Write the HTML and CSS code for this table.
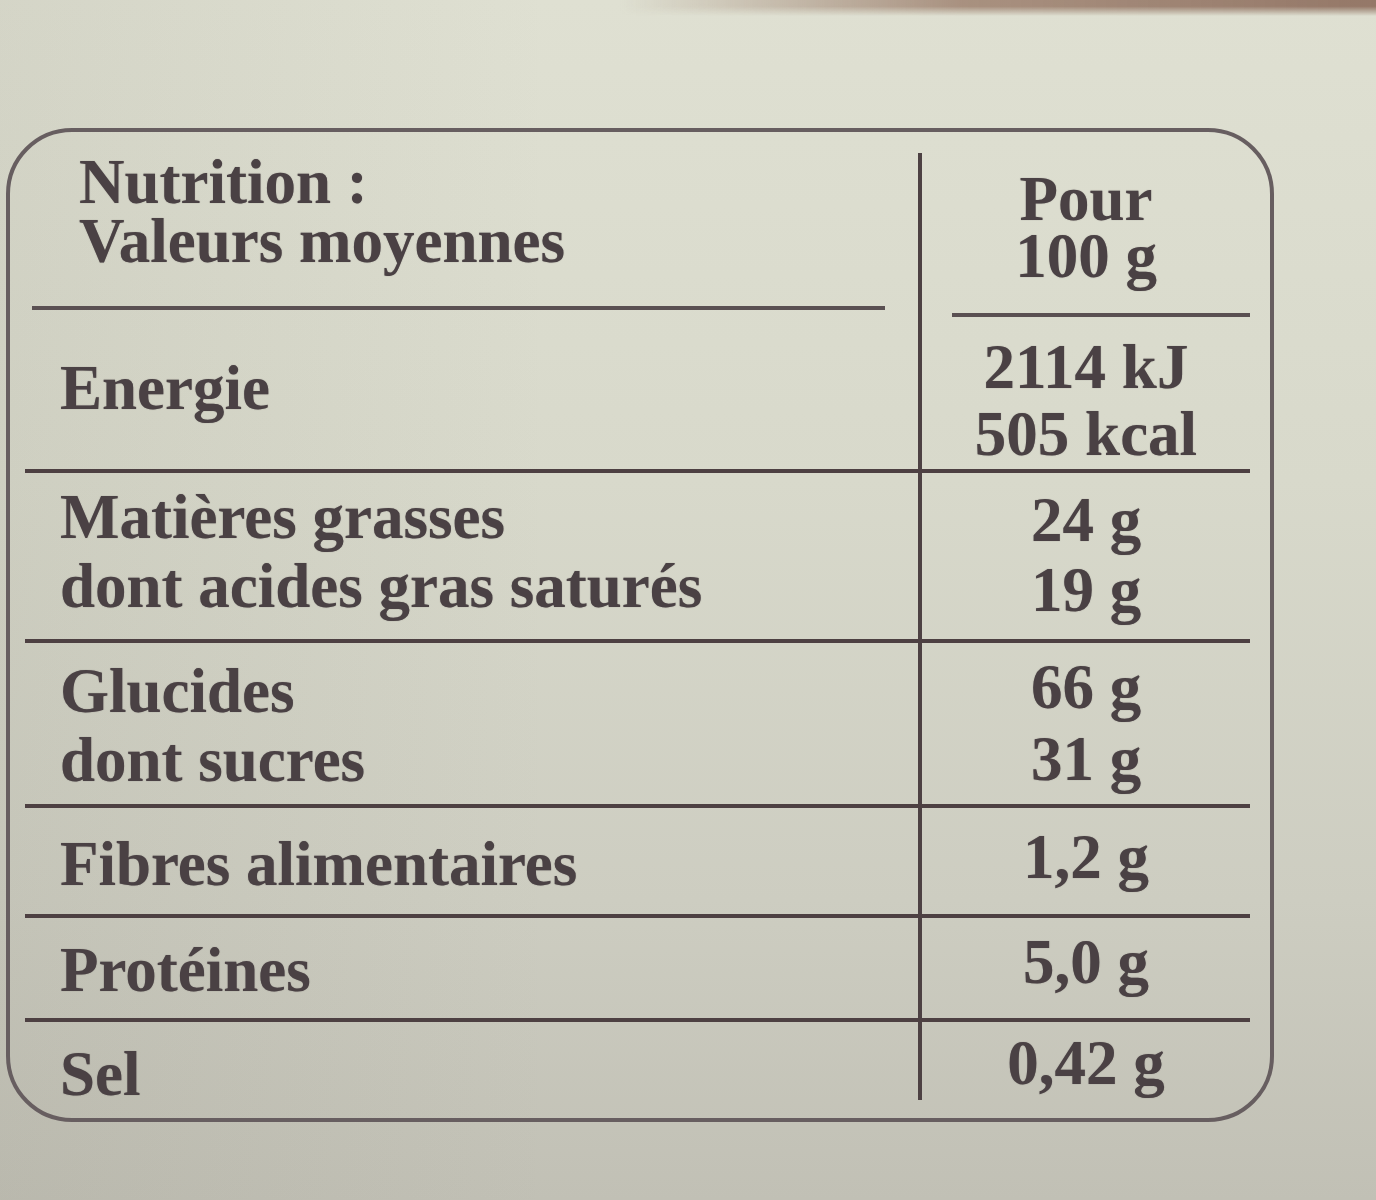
FILE: index.html
```html
<!DOCTYPE html>
<html lang="fr">
<head>
<meta charset="utf-8">
<title>Nutrition : Valeurs moyennes</title>
<link rel="stylesheet" href="styles.css">
</head>
<body>
<div class="edge"></div>
<div class="label">
  <div class="row head">
    <div class="cell-l"><div class="head-l">Nutrition :<br>Valeurs moyennes</div></div>
    <div class="cell-r"><div class="head-r">Pour<br>100 g</div></div>
  </div>
  <div class="row ruled energy">
    <div class="cell-l">Energie</div>
    <div class="cell-r">2114 kJ<br>505 kcal</div>
  </div>
  <div class="row ruled fat">
    <div class="cell-l">Matières grasses<br>dont acides gras saturés</div>
    <div class="cell-r">24 g<br>19 g</div>
  </div>
  <div class="row ruled carbs">
    <div class="cell-l">Glucides<br>dont sucres</div>
    <div class="cell-r">66 g<br>31 g</div>
  </div>
  <div class="row ruled fibre">
    <div class="cell-l">Fibres alimentaires</div>
    <div class="cell-r">1,2 g</div>
  </div>
  <div class="row ruled protein">
    <div class="cell-l">Protéines</div>
    <div class="cell-r">5,0 g</div>
  </div>
  <div class="row salt">
    <div class="cell-l">Sel</div>
    <div class="cell-r">0,42 g</div>
  </div>
</div>
</body>
</html>
```
FILE: styles.css
```css
html {
  background: #c8c8bc;
}

body {
  margin: 0;
  width: 1376px;
  min-height: 1200px;
  overflow: hidden;
  background:
    linear-gradient(90deg, rgba(120, 118, 105, 0.10) 0%, rgba(120, 118, 105, 0) 40%),
    linear-gradient(180deg, #dfe0d2 0%, #d8d9cb 40%, #cdcdc1 75%, #c1c0b5 100%);
  font-family: "Liberation Serif", "Times New Roman", serif;
  font-weight: bold;
  font-size: 63px;
  color: #4a4144;
  text-shadow: 0 0 1px rgba(74, 65, 68, 0.5);
}

.edge {
  height: 16px;
  background: linear-gradient(90deg, rgba(150, 118, 100, 0) 45%, rgba(150, 118, 100, 0.75) 70%, rgba(140, 108, 92, 0.9) 100%);
  -webkit-mask-image: linear-gradient(180deg, #000 40%, transparent 100%);
  mask-image: linear-gradient(180deg, #000 40%, transparent 100%);
}

.label {
  margin: 112px 0 0 6px;
  width: 1268px;
  height: 994px;
  box-sizing: border-box;
  border: 4px solid #675e60;
  border-radius: 66px;
  padding-top: 21px;
}

.row {
  margin: 0 20px 0 15px;
  display: grid;
  grid-template-columns: 893px 1fr;
  grid-template-rows: minmax(0, 1fr);
  box-sizing: border-box;
}

.ruled {
  border-bottom: 4px solid #4d4042;
}

.cell-l {
  padding-left: 35px;
  line-height: 69px;
  white-space: nowrap;
}

.cell-r {
  border-left: 4px solid #4d4143;
  text-align: center;
  line-height: 70px;
  white-space: nowrap;
}

/* header */
.head {
  height: 164px;
}

.head .cell-l {
  padding-left: 0;
}

.head-l {
  margin: 0 33px 0 7px;
  height: 157px;
  box-sizing: border-box;
  border-bottom: 4px solid #5a5052;
  padding-left: 47px;
  line-height: 59px;
}

.head-r {
  margin-left: 30px;
  height: 164px;
  box-sizing: border-box;
  border-bottom: 4px solid #5a5052;
  padding: 18px 30px 0 0;
  line-height: 57px;
}

/* rows */
.energy { height: 156px; }
.energy .cell-l { padding-top: 37px; }
.energy .cell-r { padding-top: 17px; line-height: 67px; }

.fat { height: 170px; }
.fat .cell-l { padding-top: 10px; }
.fat .cell-r { padding-top: 12px; }

.carbs { height: 165px; }
.carbs .cell-l { padding-top: 14px; }
.carbs .cell-r { padding-top: 8px; line-height: 72px; }

.fibre { height: 110px; }
.fibre .cell-l { padding-top: 22px; }
.fibre .cell-r { padding-top: 14px; }

.protein { height: 104px; }
.protein .cell-l { padding-top: 18px; }
.protein .cell-r { padding-top: 9px; }

.salt { height: 78px; }
.salt .cell-l { padding-top: 18px; }
.salt .cell-r { padding-top: 6px; }
```
